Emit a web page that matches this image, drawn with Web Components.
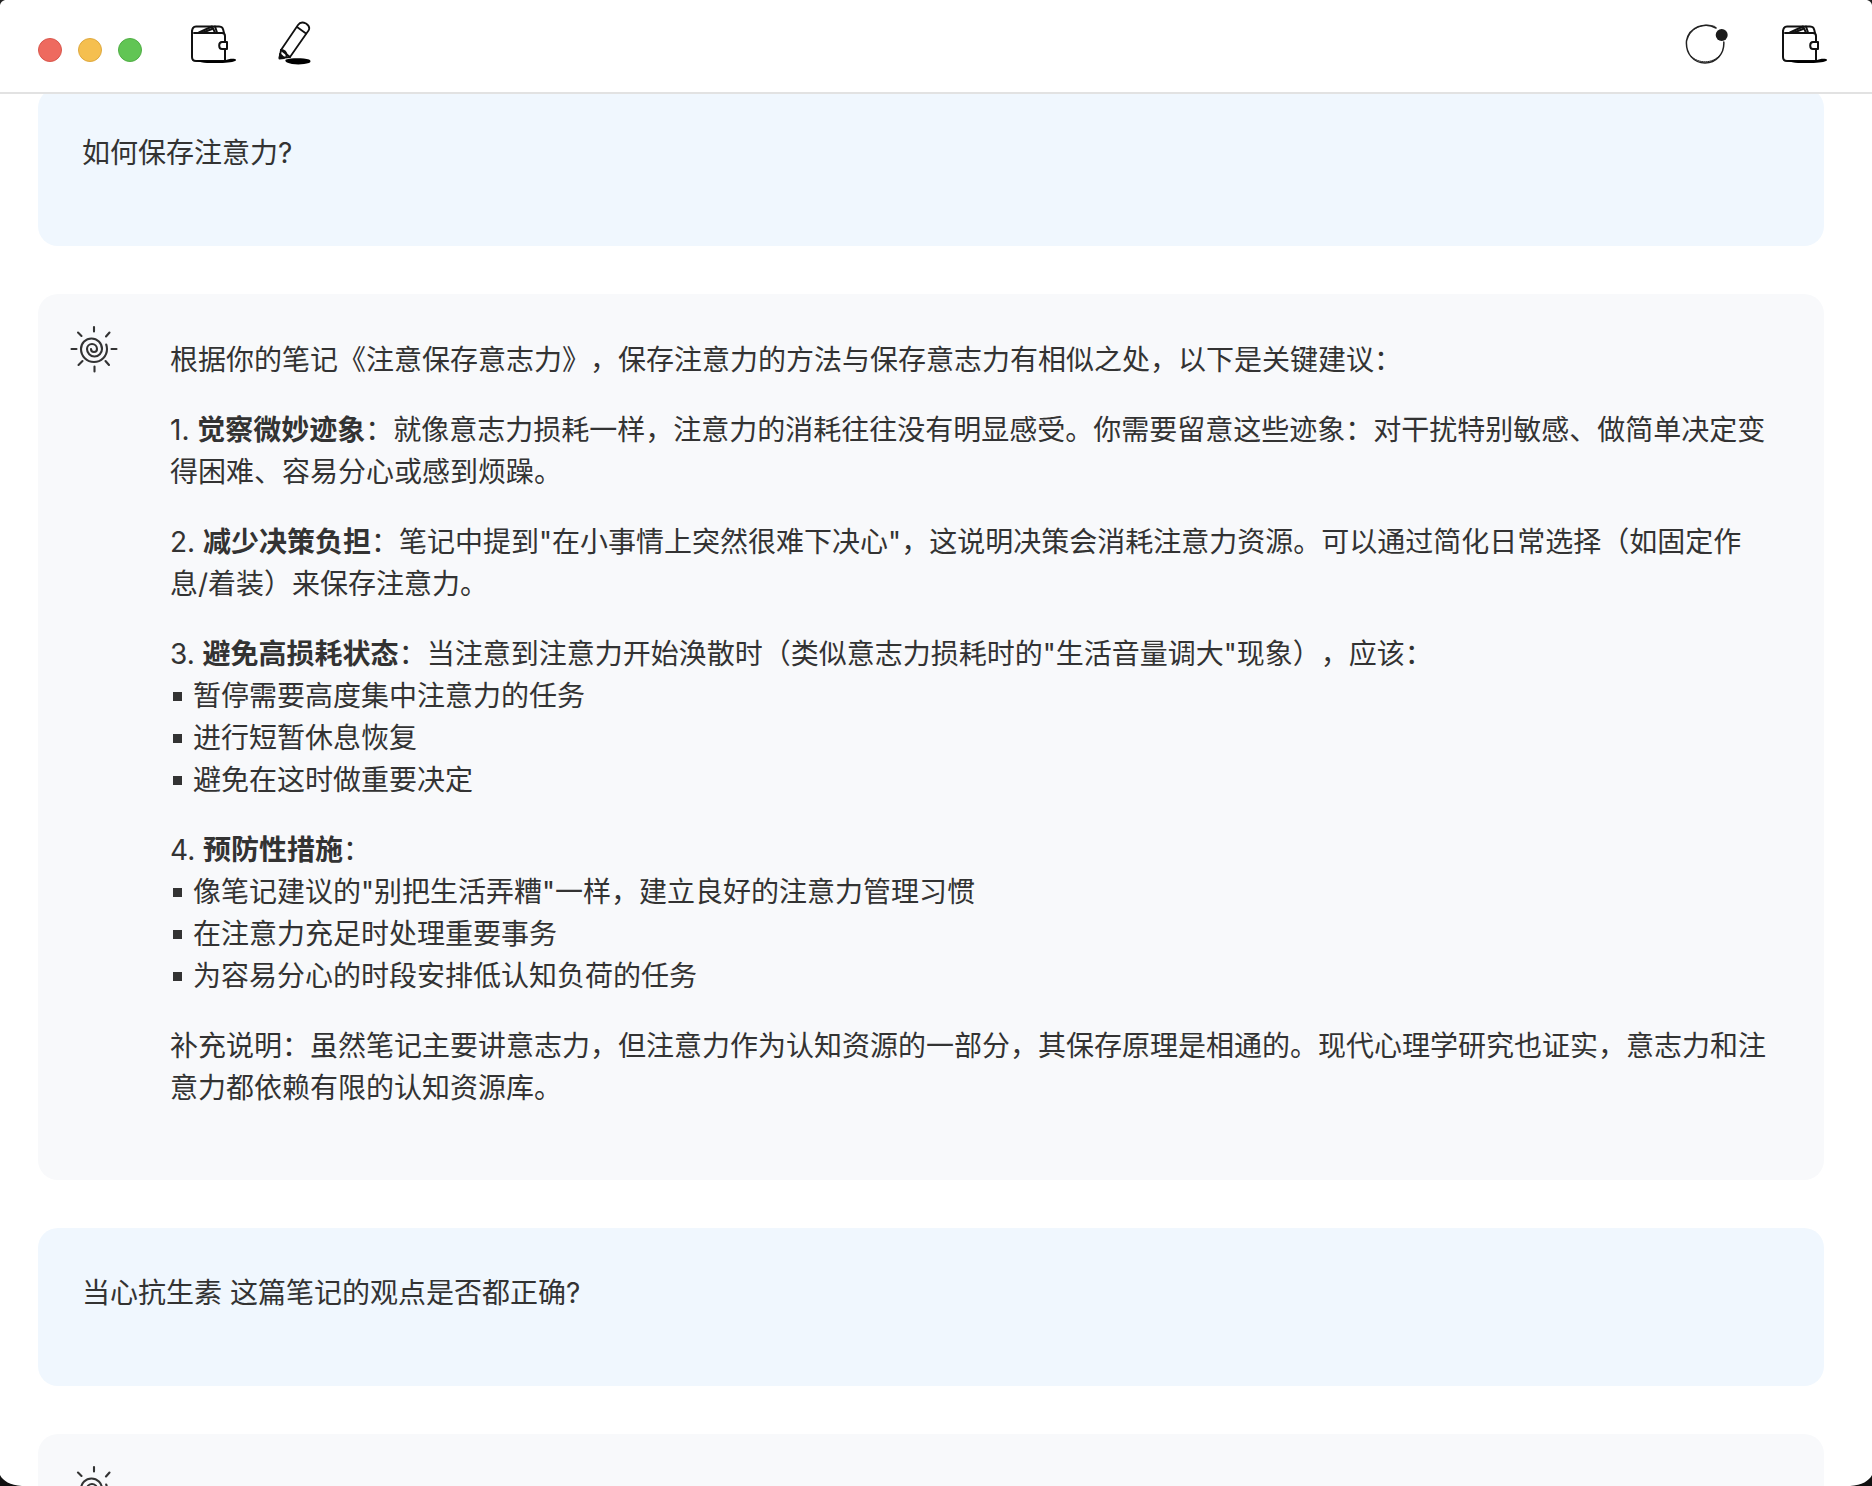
<!DOCTYPE html>
<html lang="zh">
<head>
<meta charset="utf-8">
<title>Notes chat</title>
<style>
  html, body { margin: 0; padding: 0; background: #fff; }
  body { height: 1486px; overflow: hidden; font-family: Inter, "Noto Sans CJK SC", sans-serif; color: #333; text-spacing-trim: space-all; }
  b { font-weight: 700; }
</style>
</head>
<body>
<template id="wallet-tpl">
  <style>:host { display: inline-flex; } svg { display: block; }</style>
  <svg width="46" height="38" viewBox="0 0 46 38" fill="none" stroke="#111" stroke-width="2" stroke-linecap="round" stroke-linejoin="round">
    <path d="M1 7c0-3.500 1-5.500 4-5.500h23c3 0 4 1 5 6.500"/>
    <path d="M1 6v26c0 2.500 1.500 4 4 4h29V11c0-2-1-3-3-3H3"/>
    <path d="M8 7.500 21 1.500l3 6"/>
    <path d="M12 7.500l9-3.500"/>
    <path d="M24 1.500 26 7.500"/>
    <path d="M36 17h-5c-1.800 0-2.800 1.500-2.800 3.500S29.200 24 31 24h5z" fill="#fff"/>
    <path d="M5 35.500h29c3-1.500 7-2 10-1.500 1.500 .5 1.500 1.500 0 2-3 1.500-10 2-18 2-8 .5-15 0-21-2.500z" fill="#000" stroke="none"/>
  </svg>
</template>

<template id="pencil-tpl">
  <style>:host { display: inline-flex; } svg { display: block; }</style>
  <svg width="34" height="46" viewBox="0 0 34 46" fill="none" stroke="#111" stroke-width="1.800" stroke-linecap="round" stroke-linejoin="round">
    <path d="M3 29 20 4C22 1 25 1 28 2.500 31 4.500 32 7 30.500 9.500L12 36z"/>
    <path d="M19 6 28 12.500"/>
    <path d="M3 29 1.500 37 12 36"/>
    <path d="M3 29C6 29 9 31 8.500 35"/>
    <path d="M2 33 1.500 37.500 6 37z" fill="#000"/>
    <path d="M8 38.500C14 36.500 26 37 31 38.500 33 39.500 33 41 31 42 25 44 14 44 9 41.500 7 40.500 7 39 8 38.500z" fill="#000" stroke="none"/>
  </svg>
</template>

<template id="ring-tpl">
  <style>:host { display: inline-flex; } svg { display: block; }</style>
  <svg width="44" height="44" viewBox="0 0 44 44" fill="none" stroke="#222" stroke-linecap="round">
    <path d="M31 6C20 -.5 4 5 1.500 19 .5 32 9 41 20 41 31 41 39.500 32 38.800 20" stroke-width="1.500"/>
    <path d="M30 4.500C20 .5 6 5 2.500 17" stroke-width=".8"/>
    <path d="M6 34C13 42 28 42 35 33" stroke-width="1"/>
    <circle cx="36.700" cy="13" r="6" fill="#1a1a1a" stroke="none"/>
  </svg>
</template>

<template id="sun-tpl">
  <style>:host { display: inline-flex; align-self: start; } svg { display: block; }</style>
  <svg width="48" height="48" viewBox="0 0 48 48" fill="none" stroke="#333" stroke-width="2.100" stroke-linecap="round">
    <path d="M24 2v4.500M24.500 41.500v5M1.500 24h5M41.500 24h5M8 7.500l3.500 3.500M39.500 7.500l-3.500 4M8.500 40l4-4M39 40l-3.500-4"/>
    <path d="M36.200 19.500C36.800 21 37 22.500 37 24A13 13 0 0 1 11 24 10.500 10.500 0 0 1 32 24 7.500 7.500 0 0 1 17 24 5 5 0 0 1 27 24 3 3 0 0 1 21 24"/>
  </svg>
</template>

<template id="title-bar-tpl">
  <style>
    :host { display: flex; position: relative; z-index: 1; align-items: center; justify-content: space-between; height: 88px; padding: 0 44px 4px 38px; background: #fff; border-bottom: 2px solid #e2e2e2; }
    .left, .right { display: flex; align-items: center; }
    .lights { display: flex; gap: 16px; margin: 12px 49px 0 0; }
    .lights i { width: 24px; height: 24px; border-radius: 50%; box-sizing: border-box; border: 1px solid; }
    .red { background: #ee6a5f; border-color: #d9574d !important; }
    .yellow { background: #f5bf4f; border-color: #dfa93f !important; }
    .green { background: #61c554; border-color: #50ae45 !important; }
    .tools { display: flex; align-items: center; gap: 41px; }
    .right { gap: 53px; }
  </style>
  <div class="left">
    <div class="lights"><i class="red"></i><i class="yellow"></i><i class="green"></i></div>
    <div class="tools"><icon-wallet></icon-wallet><icon-pencil></icon-pencil></div>
  </div>
  <div class="right"><icon-ring></icon-ring><icon-wallet></icon-wallet></div>
</template>

<template id="user-card-tpl">
  <style>
    :host { display: block; background: #f0f7fe; border-radius: 20px; padding: 44px 44px 72px; font-size: 28px; line-height: 42px; }
  </style>
  <slot></slot>
</template>

<template id="ai-card-tpl">
  <style>
    :host { display: grid; grid-template-columns: 48px 1fr; column-gap: 52px; background: #f8f9fb; border-radius: 20px; padding: 31px 56px 43px 32px; font-size: 28px; line-height: 42px; }
    .body { padding-top: 14px; }
    ::slotted(p) { margin: 0 0 28px; }
    ::slotted(ul) { margin: 0 0 28px; padding: 0; }
  </style>
  <icon-sun></icon-sun>
  <div class="body"><slot></slot></div>
</template>

<template id="bullet-item-tpl">
  <style>
    :host { display: flex; align-items: center; }
    .dot { width: 9px; height: 9px; background: #333; margin: 0 11px 0 3px; flex: none; }
  </style>
  <span class="dot"></span><span><slot></slot></span>
</template>

<template id="chat-thread-tpl">
  <style>
    :host { display: flex; flex-direction: column; gap: 48px; margin-top: -6px; padding: 0 48px 0 38px; }
  </style>
  <slot></slot>
</template>

<template id="window-corners-tpl">
  <style>
    :host { display: block; }
    svg { position: absolute; display: block; z-index: 2; }
    .tl { left: 0; top: 0; } .tr { right: 0; top: 0; transform: scaleX(-1); }
    .bl { left: 0; top: 1475px; transform: scaleY(-1); } .br { right: 0; top: 1475px; transform: scale(-1, -1); }
    .small { width: 5px; height: 5px; }
    .big { width: 22px; height: 11px; }
  </style>
  <svg class="tl small" viewBox="0 0 5 5"><path d="M0 0h5C2.500 .5 .5 2.500 0 5z" fill="#222"/></svg>
  <svg class="tr small" viewBox="0 0 5 5"><path d="M0 0h5C2.500 .5 .5 2.500 0 5z" fill="#222"/></svg>
  <svg class="bl big" viewBox="0 0 22 11"><path d="M0 0h22C10 1 3 5 0 11z" fill="#111"/></svg>
  <svg class="br big" viewBox="0 0 22 11"><path d="M0 0h22C10 1 3 5 0 11z" fill="#111"/></svg>
</template>

<title-bar></title-bar>
<chat-thread>
  <user-card>如何保存注意力?</user-card>
  <ai-card>
    <p>根据你的笔记《注意保存意志力》，保存注意力的方法与保存意志力有相似之处，以下是关键建议：</p>
    <p>1. <b>觉察微妙迹象</b>：就像意志力损耗一样，注意力的消耗往往没有明显感受。你需要留意这些迹象：对干扰特别敏感、做简单决定变得困难、容易分心或感到烦躁。</p>
    <p>2. <b>减少决策负担</b>：笔记中提到"在小事情上突然很难下决心"，这说明决策会消耗注意力资源。可以通过简化日常选择（如固定作息/着装）来保存注意力。</p>
    <p style="margin:0">3. <b>避免高损耗状态</b>：当注意到注意力开始涣散时（类似意志力损耗时的"生活音量调大"现象），应该：</p>
    <ul>
      <bullet-item>暂停需要高度集中注意力的任务</bullet-item>
      <bullet-item>进行短暂休息恢复</bullet-item>
      <bullet-item>避免在这时做重要决定</bullet-item>
    </ul>
    <p style="margin:0">4. <b>预防性措施</b>：</p>
    <ul>
      <bullet-item>像笔记建议的"别把生活弄糟"一样，建立良好的注意力管理习惯</bullet-item>
      <bullet-item>在注意力充足时处理重要事务</bullet-item>
      <bullet-item>为容易分心的时段安排低认知负荷的任务</bullet-item>
    </ul>
    <p>补充说明：虽然笔记主要讲意志力，但注意力作为认知资源的一部分，其保存原理是相通的。现代心理学研究也证实，意志力和注意力都依赖有限的认知资源库。</p>
  </ai-card>
  <user-card>当心抗生素 这篇笔记的观点是否都正确?</user-card>
  <ai-card></ai-card>
</chat-thread>
<window-corners></window-corners>

<script>
  // every element just clones its template into an open shadow root
  const simple = {
    'icon-wallet': 'wallet-tpl',
    'icon-pencil': 'pencil-tpl',
    'icon-ring': 'ring-tpl',
    'icon-sun': 'sun-tpl',
    'title-bar': 'title-bar-tpl',
    'user-card': 'user-card-tpl',
    'ai-card': 'ai-card-tpl',
    'bullet-item': 'bullet-item-tpl',
    'chat-thread': 'chat-thread-tpl',
    'window-corners': 'window-corners-tpl',
  };

  for (const [tag, tplId] of Object.entries(simple)) {
    customElements.define(tag, class extends HTMLElement {
      constructor() {
        super();
        this.shadowDOM = this.attachShadow({ mode: 'open' });
        this.shadowDOM.appendChild(document.getElementById(tplId).content.cloneNode(true));
      }
    });
  }
</script>
</body>
</html>
